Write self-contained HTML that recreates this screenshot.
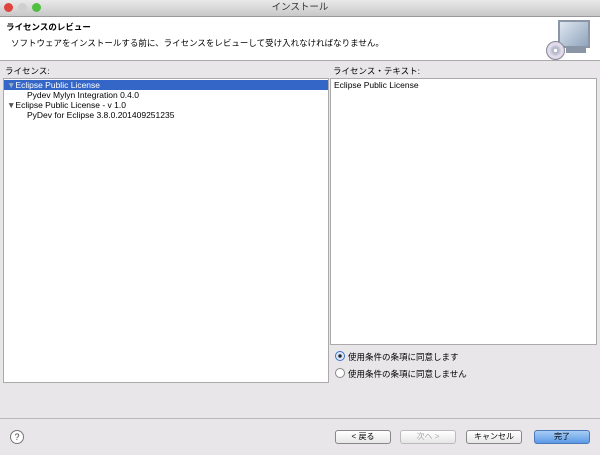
<!DOCTYPE html><html><head><meta charset="utf-8"><style>
body{margin:0;width:600px;height:455px;background:#e8e6e8;font-family:"Liberation Sans","Noto Sans CJK JP",sans-serif;font-size:8.5px;color:#000;position:relative;overflow:hidden}
.a{position:absolute}
.tb{left:0;top:0;width:600px;height:16px;background:linear-gradient(#e9e9e9,#c8c8c8);border-bottom:1px solid #999;text-align:center;line-height:15px;font-size:9.5px;color:#333}
.dot{top:3px;width:9px;height:9px;border-radius:50%}
.hd{left:0;top:17px;width:600px;height:43px;background:#fff;border-bottom:1px solid #aaa}
.box{background:#fff;border:1px solid #aaa}
.btn{top:430px;height:12px;border:1px solid #888;border-radius:3px;background:linear-gradient(#fff,#e6e6e6);text-align:center;line-height:12px;font-size:8px}
.r{width:8px;height:8px;border-radius:50%;border:1px solid #888;background:#fff}
.row{height:10px;line-height:10px}
</style></head><body>
<div class="a tb">インストール</div>
<div class="a dot" style="left:4px;background:#e0443e"></div>
<div class="a dot" style="left:18px;background:#cfcfcf"></div>
<div class="a dot" style="left:32px;background:#4fbf3f"></div>
<div class="a hd">
<div class="a" style="left:6px;top:4px;font-weight:bold;font-size:8.5px">ライセンスのレビュー</div>
<div class="a" style="left:11px;top:20px">ソフトウェアをインストールする前に、ライセンスをレビューして受け入れなければなりません。</div>
<div class="a" style="left:558px;top:3px;width:32px;height:28px;background:linear-gradient(135deg,#dde6f0,#8fa4bc);border:2px solid #8a96a6;box-sizing:border-box"></div>
<div class="a" style="left:566px;top:31px;width:20px;height:5px;background:#8a96a6"></div>
<div class="a" style="left:546px;top:24px;width:17px;height:17px;border-radius:50%;background:radial-gradient(#fff 12%,#a8b0c0 18%,#e8e0f0 55%,#b0b8c8 100%);border:1px solid #889"></div>
</div>
<div class="a" style="left:5px;top:65px">ライセンス:</div>
<div class="a" style="left:333px;top:65px">ライセンス・テキスト:</div>
<div class="a box" style="left:3px;top:78px;width:324px;height:303px">
<div class="row" style="background:#3466c8;color:#fff;padding-left:3px;margin-top:1px"><span style="color:#9ab">▼</span>Eclipse Public License</div>
<div class="row" style="padding-left:23px">Pydev Mylyn Integration 0.4.0</div>
<div class="row" style="padding-left:3px"><span style="color:#555">▼</span>Eclipse Public License - v 1.0</div>
<div class="row" style="padding-left:23px">PyDev for Eclipse 3.8.0.201409251235</div>
</div>
<div class="a box" style="left:330px;top:78px;width:265px;height:265px"><div style="padding:1px 3px">Eclipse Public License</div></div>
<div class="a r" style="left:335px;top:351px;border-color:#3a70c8;background:radial-gradient(#222 25%,#cde 35%,#fff)"></div>
<div class="a" style="left:348px;top:351px">使用条件の条項に同意します</div>
<div class="a r" style="left:335px;top:368px"></div>
<div class="a" style="left:348px;top:368px">使用条件の条項に同意しません</div>
<div class="a" style="left:0;top:418px;width:600px;border-top:1px solid #b8b8b8"></div>
<div class="a" style="left:10px;top:430px;width:12px;height:12px;border-radius:50%;border:1px solid #777;background:#fff;text-align:center;line-height:12px;font-size:9px;color:#444">?</div>
<div class="a btn" style="left:335px;width:54px">&lt; 戻る</div>
<div class="a btn" style="left:400px;width:54px;color:#aaa;border-color:#bbb">次へ &gt;</div>
<div class="a btn" style="left:466px;width:54px">キャンセル</div>
<div class="a btn" style="left:534px;width:54px;background:linear-gradient(#a8cdf5,#5c9ae6);border-color:#4a78b8">完了</div>
</body></html>
